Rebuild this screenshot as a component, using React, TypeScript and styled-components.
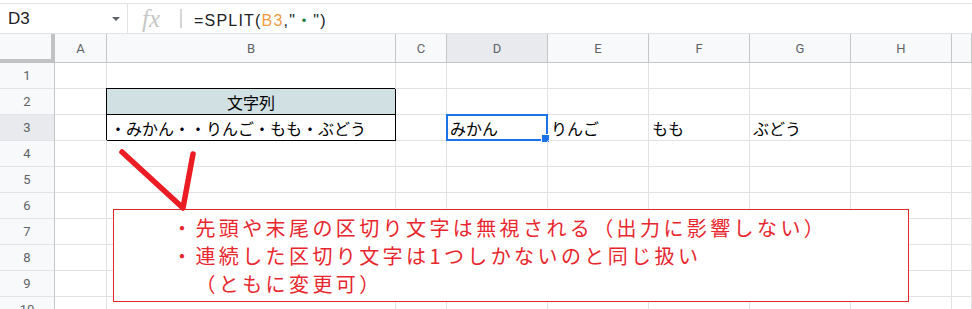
import styled, { createGlobalStyle } from "styled-components";

const GlobalStyle = createGlobalStyle`
  body {
    margin: 0;
    background: #fff;
    font-family: Roboto, "Liberation Sans", sans-serif;
  }
`;

const Page = styled.div`
  position: relative;
  width: 972px;
  height: 309px;
  overflow: hidden;
`;

const FormulaBar = styled.div`
  display: flex;
  align-items: center;
  height: 29px;
  margin-top: 3px;
  border-top: 1px solid #e1e3e6;
  border-bottom: 1px solid #e1e3e6;
`;

const NameBox = styled.div`
  display: flex;
  align-items: center;
  justify-content: space-between;
  width: 128px;
  height: 100%;
  box-sizing: border-box;
  padding: 0 7px 0 8px;
  border-right: 1px solid #e1e3e6;
  font: 17px "Liberation Sans", Arial, sans-serif;
  color: #202124;
`;

const Fx = styled.span`
  margin-left: 14px;
  width: 38px;
  font: italic 25px "Liberation Serif", serif;
  line-height: 1;
  color: #c4c7c5;
`;

const Divider = styled.span`
  width: 2px;
  height: 19px;
  background: #d3d5d7;
`;

const Formula = styled.div`
  margin-left: 12px;
  font: 16px "Liberation Sans", "Noto Sans CJK JP", sans-serif;
  letter-spacing: 1.2px;
  color: #202124;
  white-space: pre;
  text-spacing-trim: space-all;
`;

const Ref = styled.span<{ $color: string }>`
  color: ${(p) => p.$color};
`;

const Sheet = styled.div`
  display: grid;
  grid-template-columns: 55px 52px 289px 51px repeat(5, 101px) 1fr;
  grid-template-rows: 29px repeat(10, 26px);
`;

const Corner = styled.div`
  background: #f8f9fa;
  border-right: 4px solid #c0c2c4;
  border-bottom: 4px solid #c0c2c4;
`;

const ColHeader = styled.div<{ $active?: boolean }>`
  display: flex;
  align-items: center;
  justify-content: center;
  background: ${(p) => (p.$active ? "#e8eaed" : "#f8f9fa")};
  border-right: 1px solid #c4c7c5;
  border-bottom: 1px solid #c4c7c5;
  font-size: 13px;
  color: #5f6368;
`;

const RowHeader = styled.div<{ $active?: boolean }>`
  display: flex;
  align-items: center;
  justify-content: center;
  background: ${(p) => (p.$active ? "#e8eaed" : "#f8f9fa")};
  border-right: 1px solid #c4c7c5;
  border-bottom: 1px solid #e1e3e6;
  font-size: 13px;
  color: #5f6368;
`;

const Cell = styled.div<{ $boxed?: boolean; $bg?: string; $center?: boolean }>`
  position: relative;
  display: flex;
  align-items: center;
  justify-content: ${(p) => (p.$center ? "center" : "flex-start")};
  padding: 1px 3px 0;
  background: ${(p) => p.$bg ?? "transparent"};
  border-right: 1px solid ${(p) => (p.$boxed ? "#000" : "#e2e2e2")};
  border-bottom: 1px solid ${(p) => (p.$boxed ? "#000" : "#e2e2e2")};
  box-shadow: ${(p) => (p.$boxed ? "-1px -1px 0 #000" : "none")};
  font: 16px "Noto Sans CJK JP", sans-serif;
  color: #000;
  white-space: nowrap;
  text-spacing-trim: space-all;
`;

const Selection = styled.span`
  position: absolute;
  inset: -1px;
  border: 2px solid #1a73e8;
`;

const Handle = styled.span`
  position: absolute;
  right: -4px;
  bottom: -4px;
  width: 7px;
  height: 7px;
  background: #1a73e8;
  border: 1px solid #fff;
`;

const Callout = styled.div`
  position: absolute;
  left: 113px;
  top: 209px;
  width: 796px;
  height: 93px;
  box-sizing: border-box;
  padding: 4px 0 0 58px;
  background: #fff;
  border: 1px solid #e2262c;
  font: 20px "Noto Sans CJK JP", sans-serif;
  line-height: 28px;
  letter-spacing: 3.4px;
  color: #e8262e;
  white-space: pre;
  text-spacing-trim: space-all;
`;

const Arrow = styled.svg`
  position: absolute;
  left: 115px;
  top: 145px;
`;

const cols = ["A", "B", "C", "D", "E", "F", "G", "H", ""];

const data: Record<number, Record<number, string>> = {
  2: { 1: "文字列" },
  3: { 1: "・みかん・・りんご・もも・ぶどう", 3: "みかん", 4: "りんご", 5: "もも", 6: "ぶどう" },
};

export default function App() {
  return (
    <Page>
      <GlobalStyle />
      <FormulaBar>
        <NameBox>
          D3
          <svg width="8" height="4" viewBox="0 0 8 4">
            <polygon points="0,0 8,0 4,4" fill="#5f6368" />
          </svg>
        </NameBox>
        <Fx>fx</Fx>
        <Divider />
        <Formula>
          =SPLIT(<Ref $color="#f29b45">B3</Ref>,"<Ref $color="#188038">・</Ref>")
        </Formula>
      </FormulaBar>
      <Sheet>
        <Corner />
        {cols.map((c, i) => (
          <ColHeader key={i} $active={c === "D"}>
            {c}
          </ColHeader>
        ))}
        {Array.from({ length: 10 }, (_, r) => {
          const row = r + 1;
          return [
            <RowHeader key={`h${row}`} $active={row === 3}>
              {row}
            </RowHeader>,
            ...cols.map((_, ci) => {
              const boxed = ci === 1 && (row === 2 || row === 3);
              const selected = ci === 3 && row === 3;
              return (
                <Cell
                  key={`${row}-${ci}`}
                  $boxed={boxed}
                  $bg={boxed && row === 2 ? "#d0e0e3" : undefined}
                  $center={row === 2}
                >
                  {data[row]?.[ci]}
                  {selected && (
                    <Selection>
                      <Handle />
                    </Selection>
                  )}
                </Cell>
              );
            }),
          ];
        })}
      </Sheet>
      <Callout>
        {"・先頭や末尾の区切り文字は無視される（出力に影響しない）\n・連続した区切り文字は1つしかないのと同じ扱い\n　（ともに変更可）"}
      </Callout>
      <Arrow width="85" height="70" viewBox="0 0 85 70">
        <polyline
          points="7,7 68,63 78,9"
          fill="none"
          stroke="#ec1c24"
          strokeWidth="5.5"
          strokeLinecap="round"
          strokeLinejoin="round"
        />
      </Arrow>
    </Page>
  );
}
